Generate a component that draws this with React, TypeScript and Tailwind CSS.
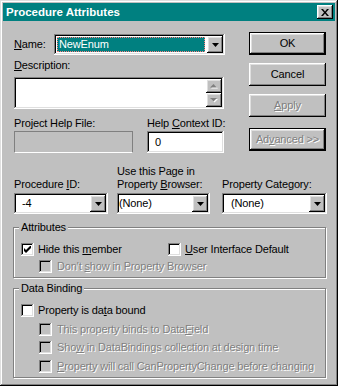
import React from "react";

const raised =
  "shadow-[inset_-1px_-1px_#000,inset_1px_1px_#fff,inset_-2px_-2px_#808080,inset_2px_2px_#dfdfdf]";
const sunken =
  "shadow-[inset_-1px_-1px_#fff,inset_1px_1px_#808080,inset_-2px_-2px_#dfdfdf,inset_2px_2px_#000]";
const dim = "text-[#808080] [text-shadow:1px_1px_#fff]";

function Arrow({ disabled }: { disabled?: boolean }) {
  if (disabled) {
    return (
      <svg width="8" height="5" viewBox="0 0 8 5">
        <polygon points="1,1 8,1 4.5,4.5" fill="#fff" />
        <polygon points="0,0 7,0 3.5,3.5" fill="#808080" />
      </svg>
    );
  }
  return (
    <svg width="7" height="4" viewBox="0 0 7 4">
      <polygon points="0,0 7,0 3.5,4" fill="#000" />
    </svg>
  );
}

function UpArrow() {
  return (
    <svg width="8" height="5" viewBox="0 0 8 5">
      <polygon points="1,4.5 8,4.5 4.5,1" fill="#fff" />
      <polygon points="0,3.5 7,3.5 3.5,0" fill="#808080" />
    </svg>
  );
}

function DropButton() {
  return (
    <div className={`flex h-[17px] w-[16px] shrink-0 items-center justify-center bg-[#c0c0c0] ${raised}`}>
      <Arrow />
    </div>
  );
}

function Combo({ className, children }: { className: string; children: React.ReactNode }) {
  return (
    <div className={`flex h-[21px] items-center bg-white p-[2px] ${sunken} ${className}`}>
      <div className="flex h-[17px] flex-1 items-center overflow-hidden whitespace-nowrap">{children}</div>
      <DropButton />
    </div>
  );
}

function Button({
  children,
  def,
  disabled,
  className = "",
}: {
  children: React.ReactNode;
  def?: boolean;
  disabled?: boolean;
  className?: string;
}) {
  return (
    <div className={`h-[23px] w-[77px] bg-[#c0c0c0] ${def ? "border border-black" : ""} ${className}`}>
      <div className={`flex h-full w-full items-center justify-center ${raised} ${disabled ? dim : ""}`}>
        {children}
      </div>
    </div>
  );
}

function Check({ checked, disabled }: { checked?: boolean; disabled?: boolean }) {
  return (
    <div
      className={`flex h-[13px] w-[13px] shrink-0 items-center justify-center ${sunken} ${
        disabled ? "bg-[#c0c0c0]" : "bg-white"
      }`}
    >
      {checked && (
        <svg width="7" height="7" viewBox="0 0 7 7">
          <polygon points="0,2 2,4 7,-1 7,2 2,7 0,5" fill="#000" />
        </svg>
      )}
    </div>
  );
}

function Option({
  label,
  checked,
  disabled,
  className = "",
}: {
  label: React.ReactNode;
  checked?: boolean;
  disabled?: boolean;
  className?: string;
}) {
  return (
    <div className={`flex h-[13px] items-center ${disabled ? "gap-[5px]" : "gap-[4px]"} ${className}`}>
      <Check checked={checked} disabled={disabled} />
      <span className={`whitespace-nowrap ${disabled ? dim : ""}`}>{label}</span>
    </div>
  );
}

export default function App() {
  return (
    <div
      className="h-[386px] w-[338px] bg-[#c0c0c0] p-[3px] font-['Liberation_Sans',Arial,sans-serif] text-[11px] leading-[13px] tracking-[-0.15px] text-black shadow-[inset_-1px_-1px_#000,inset_1px_1px_#dfdfdf,inset_-2px_-2px_#808080,inset_2px_2px_#fff]"
    >
      {/* title bar */}
      <div className="flex h-[18px] items-center justify-between bg-[#008080] pl-[3px] pr-[2px]">
        <span className="text-[11.5px] font-bold tracking-normal text-white">Procedure Attributes</span>
        <div className={`flex h-[14px] w-[16px] items-center justify-center bg-[#c0c0c0] ${raised}`}>
          <svg width="8" height="7" viewBox="0 0 8 7">
            <path d="M0 0h2l2 2.4 2-2.4h2l-3 3.5 3 3.5h-2l-2-2.4-2 2.4h-2l3-3.5z" fill="#000" />
          </svg>
        </div>
      </div>

      {/* top part */}
      <div className="flex pl-[11px]">
        <div className="w-[211px]">
          <div className="mt-[13px] flex h-[21px] items-center">
            <span className="w-[40px]">
              <u>N</u>ame:
            </span>
            <div className={`flex h-[21px] w-[171px] items-center bg-white p-[2px] ${sunken}`}>
              <div className="mr-[1px] flex h-[17px] flex-1 p-[1px]">
                <div className="flex flex-1 items-center border border-dotted border-[#ff7f7f] bg-[#008080] pl-[1px] text-white">
                  NewEnum
                </div>
              </div>
              <DropButton />
            </div>
          </div>

          <div className="mt-[4px] h-[13px]">
            <u>D</u>escription:
          </div>
          <div className={`mt-[5px] flex h-[32px] w-[210px] bg-white p-[2px] ${sunken}`}>
            <div className="flex-1" />
            <div className="flex w-[16px] flex-col">
              <div className={`flex h-[14px] items-center justify-center bg-[#c0c0c0] ${raised}`}>
                <UpArrow />
              </div>
              <div className={`flex h-[14px] items-center justify-center bg-[#c0c0c0] ${raised}`}>
                <Arrow disabled />
              </div>
            </div>
          </div>

          <div className="mt-[8px] flex">
            <div className="w-[119px]">
              <div className="h-[13px]">Project Help File:</div>
              <div className="mt-[1px] h-[22px] border border-[#808080] border-b-white bg-[#c0c0c0]" />
            </div>
            <div className="ml-[14px] w-[77px]">
              <div className="h-[13px] whitespace-nowrap">
                Help <u>C</u>ontext ID:
              </div>
              <div className={`mt-[1px] flex h-[22px] items-center bg-white pl-[8px] ${sunken}`}>0</div>
            </div>
          </div>
        </div>

        <div className="ml-[24px] flex w-[77px] flex-col">
          <Button def className="mt-[11px]">
            OK
          </Button>
          <Button className="mt-[8px]">Cancel</Button>
          <Button disabled className="mt-[8px]">
            <u>A</u>pply
          </Button>
          <Button def disabled className="mt-[11px]">
            <span>
              Ad<u>v</u>anced &gt;&gt;
            </span>
          </Button>
        </div>
      </div>

      {/* id / browser / category */}
      <div className="mt-[12px] flex items-end pl-[11px]">
        <div className="w-[94px]">
          <div className="h-[13px]">
            Procedure <u>I</u>D:
          </div>
          <Combo className="mt-[2px]">
            <span className="pl-[6px]">-4</span>
          </Combo>
        </div>
        <div className="ml-[9px] w-[93px]">
          <div className="h-[13px] whitespace-nowrap">Use this Page in</div>
          <div className="h-[13px] whitespace-nowrap">
            Property <u>B</u>rowser:
          </div>
          <Combo className="mt-[2px]">
            <span className="pl-[0px]">(None)</span>
          </Combo>
        </div>
        <div className="ml-[12px] w-[105px]">
          <div className="h-[13px] whitespace-nowrap">
            Property Cate<u>g</u>ory:
          </div>
          <Combo className="mt-[2px]">
            <span className="pl-[7px]">(None)</span>
          </Combo>
        </div>
      </div>

      {/* Attributes */}
      <fieldset className="mt-[7px] ml-[10px] h-[57px] w-[313px] border border-[#808080] px-[7px] shadow-[inset_1px_1px_#fff,1px_1px_#fff]">
        <legend className="-ml-[2px] bg-[#c0c0c0] px-[2px] leading-[13px]">Attributes</legend>
        <div className="mt-[9px] flex">
          <Option className="w-[147px]" checked label={<>Hide this <u>m</u>ember</>} />
          <Option label={<><u>U</u>ser Interface Default</>} />
        </div>
        <Option className="mt-[4px] ml-[18px]" disabled label={<>Don't <u>s</u>how in Property Browser</>} />
      </fieldset>

      {/* Data Binding */}
      <fieldset className="mt-[4px] ml-[10px] h-[96px] w-[313px] border border-[#808080] px-[7px] shadow-[inset_1px_1px_#fff,1px_1px_#fff]">
        <legend className="-ml-[2px] bg-[#c0c0c0] px-[2px] leading-[13px]">Data Binding</legend>
        <Option className="mt-[9px]" label={<>Property is da<u>t</u>a bound</>} />
        <Option className="mt-[6px] ml-[18px]" disabled label={<>This property binds to Data<u>F</u>ield</>} />
        <Option className="mt-[5px] ml-[18px]" disabled label={<>Sho<u>w</u> in DataBindings collection at design time</>} />
        <Option className="mt-[6px] ml-[18px]" disabled label={<><u>P</u>roperty will call CanPropertyChange before changing</>} />
      </fieldset>
    </div>
  );
}
